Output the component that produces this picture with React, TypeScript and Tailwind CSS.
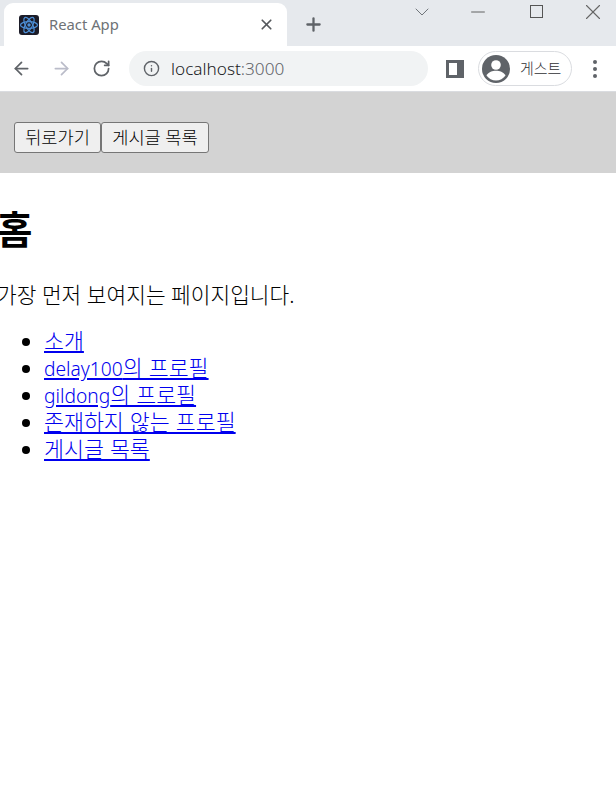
import { ArrowLeft, ArrowRight, RotateCw, Info, X, Plus, Minus, ChevronDown } from "lucide-react"

const links = [
  { latin: "", label: "소개" },
  { latin: "delay100", label: "의 프로필" },
  { latin: "gildong", label: "의 프로필" },
  { latin: "", label: "존재하지 않는 프로필" },
  { latin: "", label: "게시글 목록" },
]

function ReactLogo() {
  return (
    <svg width="20" height="20" viewBox="0 0 20 20" fill="none">
      <rect width="20" height="20" rx="3" fill="#1c1c28" />
      <g stroke="#4d8fd6" strokeWidth="1.2">
        <ellipse cx="10" cy="10" rx="8.500" ry="3.400" />
        <ellipse cx="10" cy="10" rx="8.500" ry="3.400" transform="rotate(60 10 10)" />
        <ellipse cx="10" cy="10" rx="8.500" ry="3.400" transform="rotate(120 10 10)" />
      </g>
      <circle cx="10" cy="10" r="1.700" fill="#4d8fd6" />
    </svg>
  )
}

function GuestIcon() {
  return (
    <svg width="28" height="28" viewBox="0 0 28 28">
      <circle cx="14" cy="14" r="14" fill="#5f6368" />
      <circle cx="14" cy="10" r="4.800" fill="#fff" />
      <path d="M4.500 20.500c2-3.600 6-4.800 9.500-4.800s7.500 1.200 9.500 4.800c-2.200 3-5.600 5-9.500 5s-7.300-2-9.500-5z" fill="#fff" />
    </svg>
  )
}

function BrowserChrome() {
  return (
    <div className="font-['Noto_Sans','Noto_Sans_CJK_KR',sans-serif]">
      {/* Tab strip */}
      <div className="flex h-[46px] bg-[#e6e9ed] pt-[3px] pl-[4px]">
        <div className="flex h-[43px] w-[283px] items-center rounded-t-[9px] bg-white pl-[15px] pr-[12px]">
          <ReactLogo />
          <span className="ml-[10px] flex-1 text-[14.800px] text-[#6e7276]">React App</span>
          <X size={17} strokeWidth={2.4} className="text-[#55585c]" />
        </div>
        <Plus size={21} strokeWidth={2.6} className="ml-[16px] mt-[11px] text-[#5f6368]" />
        <div className="ml-auto mr-[10px] flex h-[17px] items-center">
          <ChevronDown size={24} strokeWidth={1} className="mr-[33px] text-[#70757a]" />
          <Minus size={22} strokeWidth={1} className="mr-[41px] text-[#555]" />
          <div className="mr-[37px] h-[13px] w-[13px] border border-[#555]" />
          <X size={26} strokeWidth={1} className="text-[#666]" />
        </div>
      </div>
      {/* Toolbar */}
      <div className="flex h-[46px] items-center border-b border-[#dadce0] bg-white pl-[11px]">
        <ArrowLeft size={21} strokeWidth={2} className="text-[#5f6368]" />
        <ArrowRight size={21} strokeWidth={2} className="ml-[19px] text-[#babcc9]" />
        <RotateCw size={19} strokeWidth={2.2} className="ml-[20px] text-[#5f6368]" />
        <div className="ml-[18px] flex h-[35px] w-[299px] items-center rounded-full bg-[#f1f3f4] pl-[14px]">
          <Info size={17} strokeWidth={2} className="text-[#5f6368]" />
          <span className="ml-[11px] text-[17.200px] font-light text-[#202124]">
            localhost<span className="text-[#5f6368]">:3000</span>
          </span>
        </div>
        <svg width="18" height="18" viewBox="0 0 18 18" className="ml-[18px]">
          <path d="M0 0h18v18H0z M3 3v12h8V3z" fillRule="evenodd" fill="#5f6368" />
        </svg>
        <div className="ml-[14px] flex h-[35px] w-[94px] items-center rounded-full border border-[#dadce0] pl-[3px]">
          <GuestIcon />
          <span className="ml-[10px] font-['Noto_Sans_CJK_KR',sans-serif] text-[15px] font-light text-[#303134]">게스트</span>
        </div>
        <div className="ml-[21px] flex flex-col gap-[3px]">
          <div className="h-[4px] w-[4px] rounded-full bg-[#5f6368]" />
          <div className="h-[4px] w-[4px] rounded-full bg-[#5f6368]" />
          <div className="h-[4px] w-[4px] rounded-full bg-[#5f6368]" />
        </div>
      </div>
    </div>
  )
}

export default function App() {
  return (
    <div className="h-[799px] w-[616px] overflow-hidden bg-white text-black font-['Noto_Sans','Noto_Sans_CJK_KR',sans-serif]">
      <BrowserChrome />

      {/* Header bar */}
      <div className="flex h-[81px] items-start bg-[#d3d3d3] pl-[14px] pt-[30px]">
        <button className="h-[31px] w-[87px] rounded-[3px] border border-[#767676] bg-[#efefef] text-[17.600px] font-light leading-none">
          뒤로가기
        </button>
        <button className="h-[31px] w-[108px] rounded-[3px] border border-[#767676] bg-[#efefef] text-[17.600px] font-light leading-none">
          게시글 목록
        </button>
      </div>

      {/* Page body */}
      <div className="-ml-[3px]">
        <h1 className="mt-[28px] text-[38.500px] font-bold leading-[56px]">홈</h1>
        <p className="mt-[24px] text-[21.400px] font-light leading-[27px]">
          가장 먼저 보여지는 페이지입니다.
        </p>
        <ul className="mt-[19px] list-disc pl-[47px] text-[21.700px] font-light leading-[27px] [word-spacing:0.4px]">
          {links.map(({ latin, label }) => (
            <li key={label + latin} className="h-[27px]">
              <a href="#" className="text-[#0000ee] underline">
                {latin && <span className="text-[19.200px] font-light">{latin}</span>}
                {label}
              </a>
            </li>
          ))}
        </ul>
      </div>
    </div>
  )
}
